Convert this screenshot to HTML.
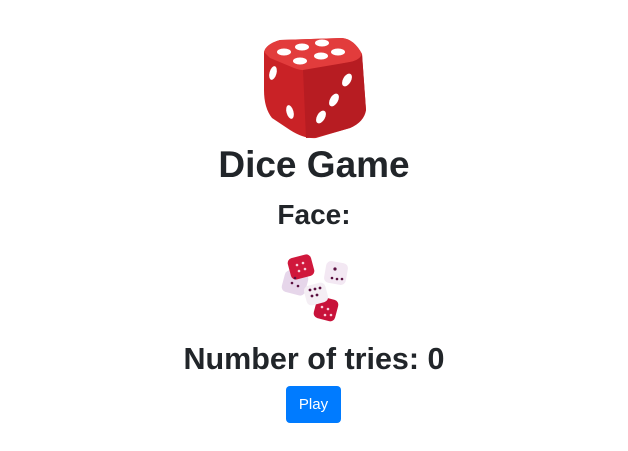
<!DOCTYPE html>
<html><head><style>
html,body{margin:0;padding:0;background:#fff;width:628px;height:451px;overflow:hidden;font-family:"Liberation Sans",sans-serif;color:#212529}
.t{position:absolute;left:0;width:628px;text-align:center;white-space:nowrap;font-weight:bold;line-height:1}
.btn{position:absolute;left:286px;top:386px;width:55px;height:37px;background:#007bff;border-radius:4px;color:#fff;font-size:15px;line-height:37px;text-align:center}
</style></head><body>
<svg style="position:absolute;left:250px;top:30px" width="130" height="110" viewBox="0 0 130 110">
<path d="M14,22 Q16,14 30,10 L92,8 Q104,9 112,24 L116,80 Q114,92 100,98 L66,108 Q54,109 40,100 L22,88 Q14,78 14,60 Z" fill="#c92226"/>
<path d="M14,22 Q16,14 30,10 L92,8 Q104,9 112,24 Q110,30 100,32 L60,40 Q52,41 44,38 L20,28 Z" fill="#e23c3c"/>
<path d="M53,40 L56,108 Q66,108 100,98 Q114,92 116,80 L112,24 Q110,30 100,32 Z" fill="#b71c22"/>
<g fill="#fff">
<ellipse cx="34" cy="22" rx="7" ry="3.5"/><ellipse cx="52" cy="17" rx="7" ry="3.5"/><ellipse cx="72" cy="13" rx="7" ry="3.5"/>
<ellipse cx="50" cy="31" rx="7" ry="3.5"/><ellipse cx="71" cy="26" rx="7" ry="3.5"/><ellipse cx="88" cy="22" rx="7" ry="3.5"/>
<ellipse cx="23" cy="43" rx="3.5" ry="7" transform="rotate(15 23 43)"/><ellipse cx="40" cy="82" rx="3.5" ry="7" transform="rotate(-15 40 82)"/>
<ellipse cx="97" cy="50" rx="4" ry="7" transform="rotate(30 97 50)"/><ellipse cx="84" cy="70" rx="4" ry="7" transform="rotate(30 84 70)"/><ellipse cx="71" cy="87" rx="4" ry="7" transform="rotate(30 71 87)"/>
</g></svg>
<div class="t" style="top:146px;font-size:37px">Dice Game</div>
<div class="t" style="top:201px;font-size:28px">Face:</div>
<svg style="position:absolute;left:270px;top:250px" width="90" height="80" viewBox="0 0 90 80">
<rect x="13" y="22" width="24" height="22" rx="5" fill="#e6d6ea" transform="rotate(15 25 33)"/>
<rect x="19" y="6" width="24" height="22" rx="5" fill="#d0183c" transform="rotate(-15 31 17)"/>
<rect x="55" y="12" width="22" height="22" rx="5" fill="#f3e8f3" transform="rotate(10 66 23)"/>
<rect x="45" y="48" width="22" height="22" rx="5" fill="#c8123a" transform="rotate(15 56 59)"/>
<rect x="35" y="34" width="22" height="20" rx="5" fill="#f4eef4" transform="rotate(-15 46 44)"/>
<g fill="#5a1040"><circle cx="40" cy="40" r="1.4"/><circle cx="45" cy="39" r="1.4"/><circle cx="50" cy="38" r="1.4"/><circle cx="42" cy="46" r="1.4"/><circle cx="47" cy="45" r="1.4"/><circle cx="65" cy="19" r="1.6"/><circle cx="62" cy="28" r="1.3"/><circle cx="67" cy="29" r="1.3"/><circle cx="72" cy="29" r="1.3"/><circle cx="22" cy="33" r="1.3"/><circle cx="28" cy="36" r="1.3"/><circle cx="25" cy="28" r="1.3"/></g>
<g fill="#f8d0dc"><circle cx="27" cy="15" r="1.3"/><circle cx="33" cy="13" r="1.3"/><circle cx="29" cy="21" r="1.3"/><circle cx="35" cy="19" r="1.3"/><circle cx="52" cy="57" r="1.3"/><circle cx="58" cy="59" r="1.3"/><circle cx="55" cy="65" r="1.3"/><circle cx="61" cy="65" r="1.3"/></g>
</svg>
<div class="t" style="top:344px;font-size:30.5px">Number of tries: 0</div>
<div class="btn">Play</div>
</body></html>
